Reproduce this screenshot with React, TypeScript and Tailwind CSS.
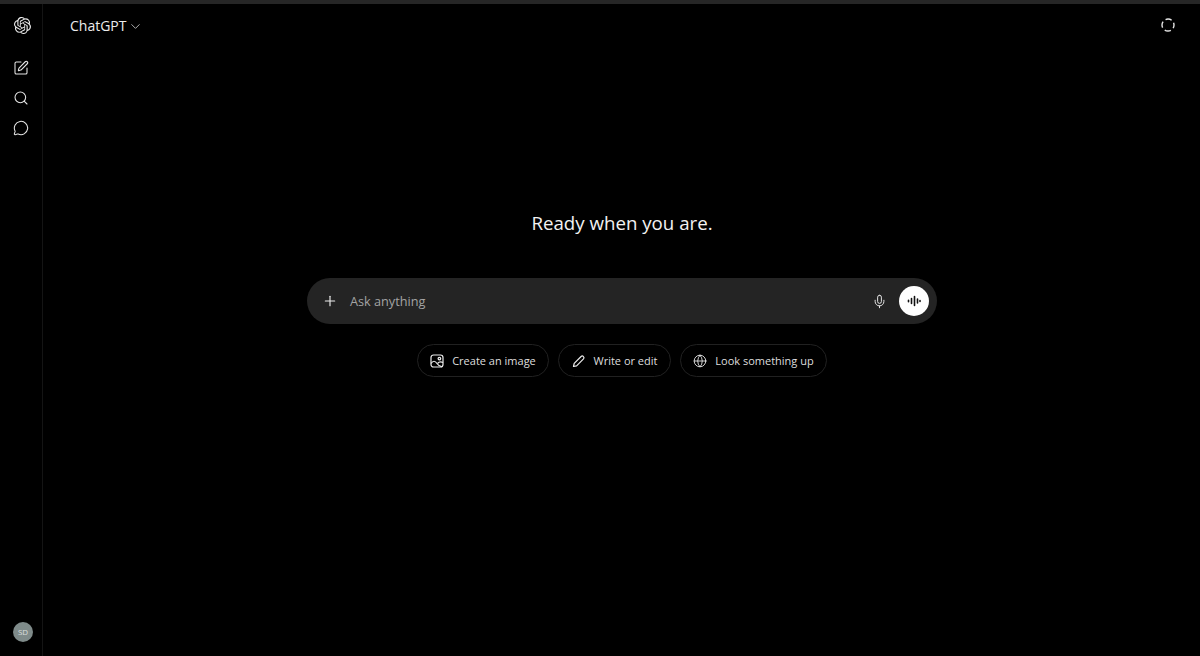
import { ChevronDown, MessageCircle, Mic, Plus, Search, SquarePen, Globe } from "lucide-react";
import { SiOpenai } from "react-icons/si";

const font = "font-['Open_Sans','Noto_Sans',sans-serif]";

const ImageIcon = () => (
  <svg width="14" height="14" viewBox="0 0 14 14" fill="none" stroke="#ececec" strokeWidth="1.2">
    <rect x="1" y="1" width="12" height="12" rx="2.5" />
    <circle cx="9.4" cy="4.6" r="1.3" />
    <path d="M1 9.500c2-3 4-3 6 0s3.500 3.300 5.500 3" />
    <path d="M7.500 9.500c1-1.200 3-2.200 5.500-1" />
  </svg>
);

const PencilIcon = () => (
  <svg width="14" height="14" viewBox="0 0 14 14" fill="none" stroke="#ececec" strokeWidth="1.2" strokeLinejoin="round">
    <path d="M1.500 12.500l.7-3.100 6.900-6.900a1.700 1.700 0 0 1 2.400 2.400l-6.900 6.900z" />
  </svg>
);

const RingIcon = () => (
  <svg width="16" height="16" viewBox="0 0 16 16" fill="none" stroke="#e5e5e5" strokeWidth="1.4">
    <circle cx="8" cy="8" r="6" strokeDasharray="6.4 3" strokeDashoffset="3.2" />
  </svg>
);

const WaveIcon = () => (
  <svg width="14" height="14" viewBox="0 0 14 14" fill="none" stroke="#111" strokeWidth="1.6" strokeLinecap="round">
    <path d="M1.500 6.300v1.400M4.500 4.500v5M7.500 2.500v9M10.500 5v4M13 6.500v1" />
  </svg>
);

const chips = [
  { label: "Create an image", icon: <ImageIcon />, width: "w-[132px]" },
  { label: "Write or edit", icon: <PencilIcon />, width: "w-[113px]" },
  { label: "Look something up", icon: <Globe size={14} strokeWidth={1.5} color="#ececec" />, width: "w-[147px]" },
];

export default function App() {
  return (
    <div className={`${font} flex h-[656px] w-[1200px] flex-col overflow-hidden bg-black text-white`}>
      <div className="h-[4px] bg-[#262626]" />
      <div className="flex min-h-0 flex-1">
        {/* sidebar */}
        <aside className="flex w-[43px] flex-col items-center border-r border-[#141414] pb-[14px] pt-[13px]">
          <SiOpenai size={17} color="#ececec" className="ml-[2px]" />
          <div className="mt-[26px] flex flex-col items-center gap-[14px]">
            <SquarePen size={16} strokeWidth={1.6} color="#e5e5e5" />
            <Search size={16} strokeWidth={1.6} color="#e5e5e5" />
            <MessageCircle size={16} strokeWidth={1.6} color="#e5e5e5" />
          </div>
          <div className="ml-[4px] mt-auto flex h-[20px] w-[20px] items-center justify-center rounded-full bg-[#7f8b8a] text-[8px] text-[#d9dfde]">
            SD
          </div>
        </aside>

        <main className="flex min-w-0 flex-1 flex-col">
          {/* header */}
          <header className="flex h-[42px] items-center justify-between pl-[27px] pr-[24px]">
            <div className="flex items-center gap-[1px] text-[14px] text-[#ececec]">
              ChatGPT
              <ChevronDown size={15} strokeWidth={1.5} color="#b4b4b4" className="mt-[2px]" />
            </div>
            <RingIcon />
          </header>

          <div className="flex flex-col items-center pl-[1px] pt-[161px]">
            <h1 className="text-[18.700px] leading-[32px] text-[#f2f2f2]">Ready when you are.</h1>

            {/* prompt box */}
            <div className="mt-[39px] flex h-[46px] w-[630px] items-center rounded-full bg-[#242424] pl-[15px] pr-[8px]">
              <Plus size={16} strokeWidth={1.7} color="#ececec" />
              <span className="ml-[12px] mt-[1px] flex-1 text-[12.700px] text-[#a3a3a3]">Ask anything</span>
              <Mic size={15} strokeWidth={1.6} color="#e5e5e5" />
              <div className="ml-[12px] flex h-[30px] w-[30px] items-center justify-center rounded-full bg-white">
                <WaveIcon />
              </div>
            </div>

            {/* suggestion chips */}
            <div className="mt-[20px] flex gap-[9px]">
              {chips.map((chip) => (
                <div
                  key={chip.label}
                  className={`${chip.width} flex h-[33px] items-center justify-center gap-[8px] rounded-full border border-[#212121] text-[11px] text-[#dedede]`}
                >
                  {chip.icon}
                  <span className="mt-[2px]">{chip.label}</span>
                </div>
              ))}
            </div>
          </div>
        </main>
      </div>
    </div>
  );
}
